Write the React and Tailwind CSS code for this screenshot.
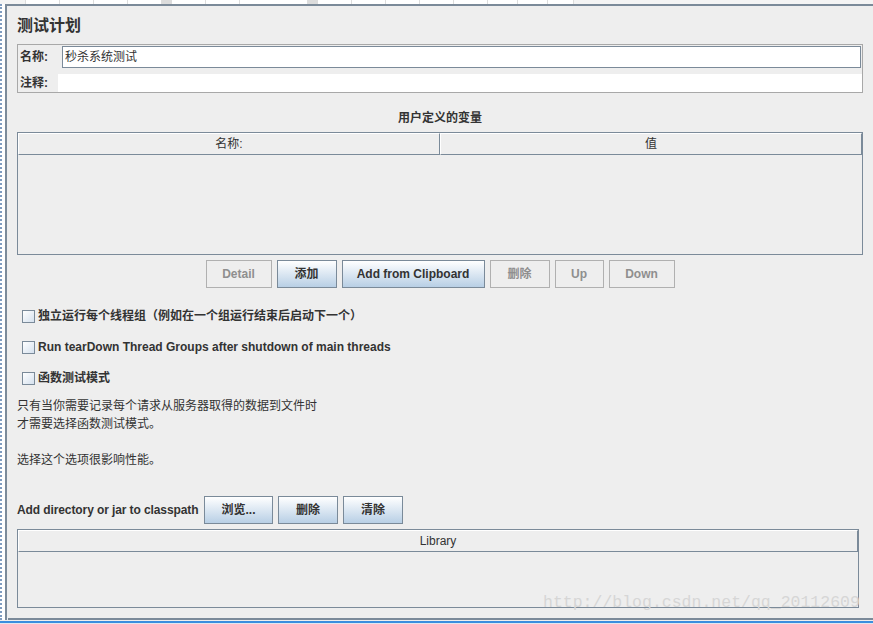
import React from "react";

const FONT = "font-['Liberation_Sans','Noto_Sans_CJK_SC',sans-serif]";

function Btn({ children, w, enabled }) {
  return (
    <div
      className={
        "h-[28px] flex items-center justify-center border text-[12px] font-bold " +
        w +
        (enabled
          ? " border-[#7a8a99] bg-gradient-to-b from-[#ffffff] to-[#b8cfe5] text-[#333333]"
          : " border-[#b0b0b0] bg-[#eeeeee] text-[#8f8f8f]")
      }
    >
      {children}
    </div>
  );
}

function Check({ children }) {
  return (
    <div className="h-[20px] flex items-center pl-[5px]">
      <div className="w-[13px] h-[13px] border border-[#7a8a99] bg-gradient-to-br from-[#ffffff] to-[#d5e1ee]" />
      <span className="ml-[3px] text-[12px] font-bold text-[#333333]">{children}</span>
    </div>
  );
}

function HeaderCell({ children, className = "" }) {
  return (
    <div
      className={
        "h-full flex items-center justify-center border-r border-b border-[#7a8a99] border-t border-l border-t-white border-l-white text-[12px] text-[#333333] " +
        className
      }
    >
      {children}
    </div>
  );
}

export default function App() {
  return (
    <div className={"relative w-[873px] h-[624px] bg-[#eeeeee] overflow-hidden flex flex-col " + FONT}>
      {/* top strip */}
      <div className="h-[4px] flex bg-[#f4f4f4]">
        <div className="w-[26px] border-r border-[#dddddd]" />
        <div className="w-[34px] border-r border-[#dddddd] bg-white" />
        <div className="w-[34px] border-r border-[#dddddd] bg-white" />
        <div className="w-[34px] border-r border-[#dddddd] bg-white" />
        <div className="w-[34px] border-r border-[#dddddd] bg-white" />
        <div className="w-[10px] bg-[#dcdcdc]" />
        <div className="w-[34px] border-r border-[#dddddd] bg-white" />
        <div className="w-[34px] border-r border-[#dddddd] bg-white" />
        <div className="w-[68px] border-r border-[#dddddd] bg-white" />
        <div className="w-[10px] bg-[#dcdcdc]" />
        <div className="w-[34px] border-r border-[#dddddd] bg-white" />
        <div className="w-[34px] border-r border-[#dddddd] bg-white" />
        <div className="w-[34px] border-r border-[#dddddd] bg-white" />
        <div className="w-[34px] border-r border-[#dddddd] bg-white" />
        <div className="w-[34px] border-r border-[#dddddd] bg-white" />
        <div className="w-[30px] border-r border-[#dddddd] bg-white" />
        <div className="w-[30px] border-r border-[#dddddd] bg-white" />
        <div className="w-[26px] border-r border-[#dddddd] bg-white" />
        <div className="flex-1" />
      </div>

      <div className="flex-1 flex">
        {/* dotted left edge */}
        <div className="w-[5px] border-l-2 border-dotted border-[#7f9cc0] bg-white" />
        {/* main panel */}
        <div className="flex-1 flex flex-col border-l-2 border-t-2 border-[#7b8a99]">
          <div className="flex-1 flex flex-col pl-[10px] pr-[10px] pt-[10px] text-[#333333]">
            {/* title */}
            <div className="h-[20px] flex items-center text-[16px] font-bold text-[#333333]">测试计划</div>

            {/* name / comment */}
            <div className="mt-[8px] h-[49px] w-[846px] border border-[#a8a8a8] flex flex-col">
              <div className="h-[24px] flex items-center">
                <span className="w-[44px] pl-[2px] text-[12px] font-bold">名称:</span>
                <div className="h-[22px] flex-1 mr-[1px] bg-white border border-[#7b8a99] flex items-center pl-[2px] text-[12px]">
                  秒杀系统测试
                </div>
              </div>
              <div className="flex-1 flex items-end">
                <span className="w-[40px] pl-[2px] h-[18px] flex items-center text-[12px] font-bold">注释:</span>
                <div className="h-[18px] flex-1 bg-white" />
              </div>
            </div>

            {/* section title */}
            <div className="h-[39px] flex items-end justify-center pb-[6px] w-[846px] text-[12px] leading-[16px] font-bold">用户定义的变量</div>

            {/* variables table */}
            <div className="w-[846px] h-[123px] border border-[#7b8a99] flex flex-col">
              <div className="h-[22px] flex">
                <HeaderCell className="w-[422px]">名称:</HeaderCell>
                <HeaderCell className="flex-1">值</HeaderCell>
              </div>
              <div className="flex-1" />
            </div>

            {/* buttons */}
            <div className="mt-[5px] w-[846px] flex justify-center gap-[5px]">
              <Btn w="w-[66px]">Detail</Btn>
              <Btn w="w-[60px]" enabled>添加</Btn>
              <Btn w="w-[143px]" enabled>Add from Clipboard</Btn>
              <Btn w="w-[60px]">删除</Btn>
              <Btn w="w-[49px]">Up</Btn>
              <Btn w="w-[66px]">Down</Btn>
            </div>

            {/* checkboxes */}
            <div className="mt-[18px] flex flex-col gap-[11px]">
              <Check>独立运行每个线程组（例如在一个组运行结束后启动下一个）</Check>
              <Check>Run tearDown Thread Groups after shutdown of main threads</Check>
              <Check>函数测试模式</Check>
            </div>

            {/* description */}
            <div className="mt-[9px] text-[12px] leading-[18px] text-[#333333]">
              <div>只有当你需要记录每个请求从服务器取得的数据到文件时</div>
              <div>才需要选择函数测试模式。</div>
              <div className="h-[18px]" />
              <div>选择这个选项很影响性能。</div>
            </div>

            {/* classpath */}
            <div className="mt-[27px] h-[28px] flex items-center gap-[5px]">
              <span className="w-[182px] whitespace-nowrap text-[12px] font-bold tracking-[-0.1px]">Add directory or jar to classpath</span>
              <Btn w="w-[69px]" enabled>浏览...</Btn>
              <Btn w="w-[60px]" enabled>删除</Btn>
              <Btn w="w-[60px]" enabled>清除</Btn>
            </div>

            {/* library table */}
            <div className="mt-[5px] w-[842px] h-[79px] border border-[#7b8a99] flex flex-col">
              <div className="h-[22px] flex">
                <HeaderCell className="flex-1">Library</HeaderCell>
              </div>
              <div className="flex-1" />
            </div>
            <div className="flex-1" />
          </div>
          <div className="h-[2px] ml-[1px] bg-[#7b8a99]" />
        </div>
      </div>
      <div className="h-[1px] bg-[#eeeeee]" />
      <div className="h-[2px] bg-[#3a8ede]" />
      <div className="h-[1px] bg-[#dfe8f0]" />

      <div className="absolute left-[543px] top-[592px] text-[16.5px] leading-[22px] text-[#d6d6d6] font-['Liberation_Mono',monospace] pointer-events-none">
        http://blog.csdn.net/qq_20112609
      </div>
    </div>
  );
}
